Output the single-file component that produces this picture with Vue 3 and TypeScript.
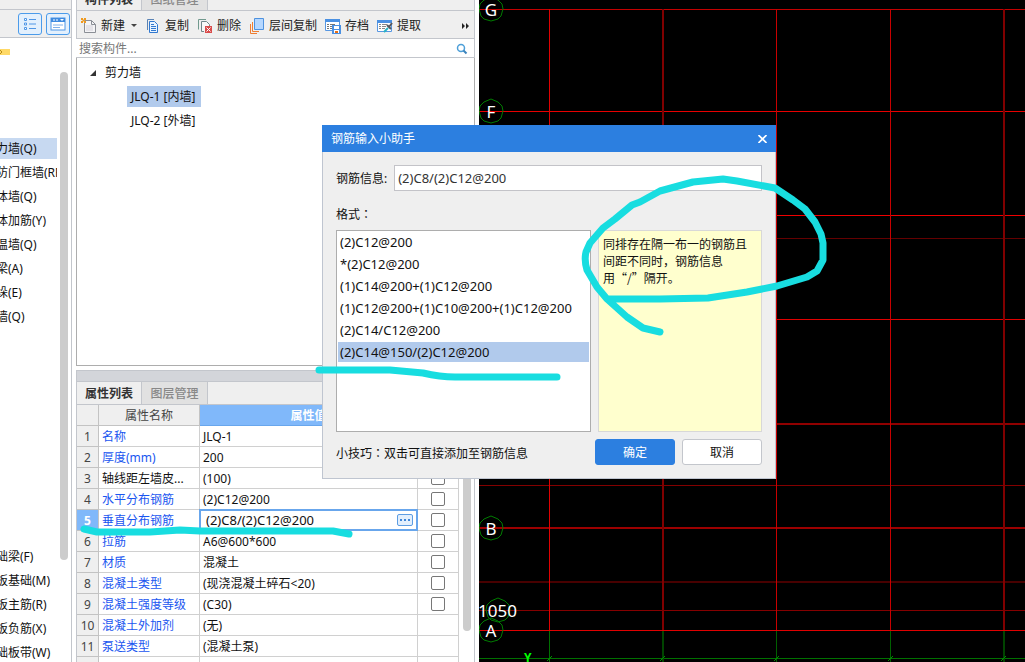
<script setup lang="ts">
import { ref } from 'vue'

interface PropertyRow {
  name: string
  value: string
  plain?: boolean
  check?: boolean
  editing?: boolean
}

const wallTypes = ['力墙(Q)', '防门框墙(RF)', '体墙(Q)', '体加筋(Y)', '温墙(Q)', '梁(A)', '垛(E)', '墙(Q)']
const baseTypes = ['础梁(F)', '板基础(M)', '板主筋(R)', '板负筋(X)', '础板带(W)']

const rows: PropertyRow[] = [
  { name: '名称', value: 'JLQ-1' },
  { name: '厚度(mm)', value: '200' },
  { name: '轴线距左墙皮...', value: '(100)', plain: true, check: true },
  { name: '水平分布钢筋', value: '(2)C12@200', check: true },
  { name: '垂直分布钢筋', value: '(2)C8/(2)C12@200', check: true, editing: true },
  { name: '拉筋', value: 'A6@600*600', check: true },
  { name: '材质', value: '混凝土', check: true },
  { name: '混凝土类型', value: '(现浇混凝土碎石<20)', check: true },
  { name: '混凝土强度等级', value: '(C30)', check: true },
  { name: '混凝土外加剂', value: '(无)' },
  { name: '泵送类型', value: '(混凝土泵)' },
]

const formats = [
  '(2)C12@200',
  '*(2)C12@200',
  '(1)C14@200+(1)C12@200',
  '(1)C12@200+(1)C10@200+(1)C12@200',
  '(2)C14/C12@200',
  '(2)C14@150/(2)C12@200',
]
const selected = ref(5)
const info = ref('(2)C8/(2)C12@200')

const hLines = [
  { y: 9, w: 1, c: '#c40000' },
  { y: 111, w: 1, c: '#e80000' },
  { y: 215, w: 1, c: '#f00000' },
  { y: 238, w: 1, c: '#640000' },
  { y: 319, w: 1, c: '#e00000' },
  { y: 423, w: 2, c: '#900000' },
  { y: 485, w: 1, c: '#840000' },
  { y: 527, w: 2, c: '#9c0000' },
  { y: 581, w: 2, c: '#480000' },
  { y: 610, w: 1, c: '#840000' },
  { y: 630, w: 1, c: '#e00000' },
]
const vLines = [
  { x: 70, w: 1, c: '#e00000', g: '#007000' },
  { x: 183, w: 2, c: '#800000', g: '#004400' },
  { x: 297, w: 1, c: '#c80000', g: '#006000' },
  { x: 411, w: 1, c: '#c80000', g: '#006000' },
  { x: 524, w: 2, c: '#800000', g: '#004400' },
]
const bubbles = [
  { t: 'G', x: 12, y: 9 },
  { t: 'F', x: 12, y: 111 },
  { t: 'B', x: 12, y: 528 },
  { t: '', x: 19, y: 610 },
  { t: 'A', x: 12, y: 630 },
]
</script>

<template>
  <main class="app">
    <aside class="types">
      <div class="types-top"></div>
      <div class="view-bar">
        <button class="view" type="button" aria-label="列表">
          <svg width="14" height="14" viewBox="0 0 14 14">
            <path d="M1.500 1.500h2v2h-2zM1.500 6h2v2h-2zM1.500 10.500h2v2h-2z" fill="#fff" stroke="#4f96e6" />
            <path d="M6 2.500h7M6 7h7M6 11.500h7" stroke="#4f96e6" />
          </svg>
        </button>
        <button class="view" type="button" aria-label="窗口">
          <svg width="16" height="14" viewBox="0 0 16 14">
            <rect x="1" y="1" width="14" height="12" fill="#fff" stroke="#4f96e6" />
            <path d="M1 1h14v4H1z" fill="#3f8be0" />
            <path d="M3 3h2M6 3h2" stroke="#fff" />
            <path d="M10 2h4l-2 2z" fill="#fff" />
            <path d="M3 8h10M3 10.500h7" stroke="#7fb0ea" />
          </svg>
        </button>
      </div>
      <div class="types-body">
        <svg class="pin" width="10" height="6" viewBox="0 0 10 6">
          <path d="M0 0h10v6H0z" fill="#ffd966" />
          <path d="M0 1l2 2-2 2" fill="none" stroke="#b98d17" />
        </svg>
        <ul class="type-list">
          <li v-for="(t, i) in wallTypes" :key="t + i" :class="{ on: i === 0 }"><span>{{ t }}</span></li>
        </ul>
        <ul class="type-list base">
          <li v-for="t in baseTypes" :key="t"><span>{{ t }}</span></li>
        </ul>
        <div class="types-thumb"></div>
      </div>
    </aside>

    <section class="middle">
      <nav class="tabs tabs-top">
        <button class="tab active" type="button">构件列表</button>
        <button class="tab" type="button">图纸管理</button>
      </nav>
      <div class="toolbar">
        <button type="button" class="tool">
          <svg width="16" height="16" viewBox="0 0 16 16">
            <path d="M3.500 2.500h7l4 4v8h-11z" fill="#f4f4f6" stroke="#8b8f96" />
            <path d="M10.500 2.500v4h4" fill="none" stroke="#8b8f96" />
            <path d="M5 8h7M5 10h7M5 12h7" stroke="#d5d2da" />
            <path d="M0 0h2v2H0zM3 0h2v2H3zM1.500 1.500h2v2h-2zM0 3h2v2H0zM3 3h2v2H3z" fill="#f09a1e" />
          </svg>新建<i class="caret"></i>
        </button>
        <button type="button" class="tool">
          <svg width="16" height="16" viewBox="0 0 16 16">
            <path d="M2.500 12V1.500H9" fill="none" stroke="#5a83b5" />
            <path d="M4.500 3.500h5l3 3v8h-8z" fill="#eaf4ff" stroke="#3279cf" />
            <path d="M6 6.500h3M6 8.500h5M6 10.500h5M6 12.500h5" stroke="#3279cf" />
          </svg>复制
        </button>
        <button type="button" class="tool">
          <svg width="16" height="16" viewBox="0 0 16 16">
            <path d="M1.500 11.500v-10H9" fill="none" stroke="#71998e" />
            <path d="M7 13.500H4.500v-10h5l3 3V8" fill="#f8f8f8" stroke="#71868a" />
            <path d="M8 8h7v7H8z" fill="#d94c4c" />
            <path d="M9.500 9.500l4 4M13.500 9.500l-4 4" stroke="#fff" />
          </svg>删除
        </button>
        <button type="button" class="tool">
          <svg width="16" height="16" viewBox="0 0 16 16">
            <path d="M1.500 6v9.500H8M3.500 4v9.500H10" fill="none" stroke="#ef7d31" />
            <path d="M5.500 .500h9v11h-9z" fill="#b5d7ff" stroke="#4e92df" />
          </svg>层间复制
        </button>
        <button type="button" class="tool">
          <svg width="16" height="16" viewBox="0 0 16 16">
            <path d="M.500 1.500h14v11H.500z" fill="#fff" stroke="#5797e2" />
            <path d="M0 1h15v3H0z" fill="#4a90e2" />
            <path d="M2 6.500h2M5 6.500h5M2 8.500h2M5 8.500h2M2 10.500h2M5 10.500h2" stroke="#777" />
            <path d="M7 7h9v9H7z" fill="#4a90e2" />
            <path d="M9 8h5v3H9z" fill="#fff" />
            <path d="M9 12h5v3H9z" fill="#fff" />
            <path d="M10 13h3v2h-3z" fill="#e86d12" />
          </svg>存档
        </button>
        <button type="button" class="tool">
          <svg width="16" height="16" viewBox="0 0 16 16">
            <path d="M.500 2.500h14v11H.500z" fill="#fff" stroke="#5797e2" />
            <path d="M0 2h15v3H0z" fill="#4a90e2" />
            <path d="M2 6.500h2M5 6.500h5M2 8.500h2M5 8.500h4M2 10.500h2M5 10.500h3" stroke="#888" />
            <path d="M7 14l4-4" stroke="#27b4c4" stroke-width="2" />
            <path d="M10 7l4 4M12 9l3-4" stroke="#53575e" stroke-width="2" />
          </svg>提取
        </button>
        <button type="button" class="more" aria-label="更多">
          <svg width="8" height="6" viewBox="0 0 8 6"><path d="M0 0l3 3-3 3zM4 0l3 3-3 3z" fill="#222" /></svg>
        </button>
      </div>
      <label class="search">
        <input type="text" placeholder="搜索构件..." aria-label="搜索构件" />
        <svg width="12" height="12" viewBox="0 0 12 12">
          <circle cx="5" cy="5" r="3.500" fill="none" stroke="#4d9fd8" stroke-width="1.500" />
          <path d="M7.500 7.500l3 3" stroke="#3c84bd" stroke-width="2" />
        </svg>
      </label>
      <div class="tree">
        <div class="tree-root">
          <svg width="8" height="8" viewBox="0 0 8 8"><path d="M7 1v6H1z" fill="#333" /></svg>剪力墙
        </div>
        <div class="leaf on">JLQ-1 [内墙]</div>
        <div class="leaf">JLQ-2 [外墙]</div>
      </div>
      <div class="splitter"></div>
      <nav class="tabs">
        <button class="tab active" type="button">属性列表</button>
        <button class="tab" type="button">图层管理</button>
      </nav>
      <div class="props">
        <table>
          <colgroup><col class="c-no" /><col class="c-name" /><col /><col class="c-check" /></colgroup>
          <thead>
            <tr><th></th><th>属性名称</th><th class="value-head">属性值</th><th></th></tr>
          </thead>
          <tbody>
            <tr v-for="(r, i) in rows" :key="r.name" :class="{ current: r.editing }">
              <td class="no">{{ i + 1 }}</td>
              <td class="name" :class="{ plain: r.plain }">{{ r.name }}</td>
              <td v-if="r.editing" class="editor">
                <div>
                  <input v-model="info" type="text" :aria-label="r.name" />
                  <button type="button" aria-label="选择">
                    <svg width="10" height="2" viewBox="0 0 10 2"><path d="M0 0h2v2H0zM4 0h2v2H4zM8 0h2v2H8z" fill="#3f86d8" /></svg>
                  </button>
                </div>
              </td>
              <td v-else class="value">{{ r.value }}</td>
              <td class="check"><input v-if="r.check" type="checkbox" :aria-label="r.name" /></td>
            </tr>
            <tr><td class="no"></td><td></td><td></td><td></td></tr>
          </tbody>
        </table>
        <div class="props-scroll"><div class="props-thumb"></div></div>
      </div>
    </section>

    <section class="canvas">
      <svg class="drawing">
        <rect v-for="l in hLines" :key="'h' + l.y" x="0" :y="l.y" width="100%" :height="l.w" :fill="l.c" />
        <rect x="0" y="658" width="100%" height="1" fill="#007000" />
        <g v-for="l in vLines" :key="'v' + l.x">
          <rect :x="l.x" y="9" :width="l.w" height="621" :fill="l.c" />
          <rect :x="l.x" y="631" :width="l.w" height="31" :fill="l.g" />
          <path :d="`M${l.x - 2} 661l5-5`" stroke="#009000" />
        </g>
        <g v-for="b in bubbles" :key="b.t">
          <polygon
            :transform="`translate(${b.x} ${b.y})`"
            points="0,-12 7,-9 11,-5 12,0 10,7 7,10 0,12 -7,10 -10,7 -12,0 -11,-5 -7,-9"
            fill="none" stroke="#007c00"
          />
          <text v-if="b.t" :x="b.x" :y="b.y + 7" text-anchor="middle">{{ b.t }}</text>
        </g>
        <text x="-1" y="617">1050</text>
        <text class="axis" x="45" y="662">Y</text>
      </svg>
    </section>

    <form class="dialog" role="dialog" aria-labelledby="dialog-title" @submit.prevent>
      <header>
        <h1 id="dialog-title">钢筋输入小助手</h1>
        <button type="button" aria-label="关闭">
          <svg width="9" height="8" viewBox="0 0 9 8"><path d="M.500 0l8 8M8.500 0l-8 8" stroke="#fff" stroke-width="1.600" /></svg>
        </button>
      </header>
      <div class="dialog-body">
        <div class="field">
          <label for="rebar">钢筋信息:</label>
          <input id="rebar" v-model="info" type="text" />
        </div>
        <p class="caption">格式<span class="colon">：</span></p>
        <div class="panes">
          <ul class="formats" role="listbox" aria-label="格式">
            <li
              v-for="(f, i) in formats" :key="f" role="option"
              :aria-selected="i === selected" :class="{ on: i === selected }" @click="selected = i"
            >{{ f }}</li>
          </ul>
          <p class="hint">同排存在隔一布一的钢筋且间距不同时，钢筋信息<br />用“/”隔开。</p>
        </div>
        <footer>
          <p>小技巧<span class="colon">：</span>双击可直接添加至钢筋信息</p>
          <button class="ok" type="submit">确定</button>
          <button type="button">取消</button>
        </footer>
      </div>
    </form>

    <svg class="marks" aria-hidden="true">
      <path d="M607 299L597 287 587 270Q584 260 586 252L590 243 603 228 615 219 632 205 640 202 660 191 693 182 723 179 737 181 775 188 793 200 805 209 815 222 821 234 823 243V260L817 271 807 277 777 286 747 292 708 298 660 299H607L627 317 643 328 660 332" />
      <path d="M319 370H390L423 373Q440 377 455 377H557" />
      <path d="M84 529L97 532H150L180 530 200 531H333L349 534" />
    </svg>
  </main>
</template>

<style>
html,
body {
  margin: 0;
  overflow: hidden;
}
</style>

<style scoped>
* {
  box-sizing: border-box;
}
.app {
  position: relative;
  display: flex;
  height: 100vh;
  overflow: hidden;
  background: #fff;
  color: #111;
  font: 12px/16px "Noto Sans", "Noto Sans CJK SC", sans-serif;
}
button,
input {
  font: inherit;
  color: inherit;
  margin: 0;
  padding: 0;
  border: 0;
  background: none;
}
button {
  display: flex;
  align-items: center;
  justify-content: center;
}
input {
  min-width: 0;
  outline: 0;
}
ul,
p,
h1 {
  margin: 0;
  padding: 0;
  list-style: none;
  font: inherit;
}
svg {
  flex: none;
}

.types {
  flex: none;
  display: flex;
  flex-direction: column;
  width: 72px;
  border-right: 1px solid #c3c6cc;
}
.types-top {
  height: 10px;
  flex: none;
  background: #efefef;
  border-bottom: 1px solid #c3c6cc;
}
.view-bar {
  height: 28px;
  flex: none;
  display: flex;
  align-items: center;
  justify-content: flex-end;
  gap: 4px;
  padding-right: 1px;
  background: #efefef;
  border-bottom: 1px solid #c3c6cc;
}
.view {
  width: 24px;
  height: 22px;
  background: #e3f0fd;
  border: 1px solid #4b9bea;
  border-radius: 3px;
}
.types-body {
  position: relative;
  flex: 1;
  min-height: 0;
  overflow: hidden;
  padding-top: 11px;
}
.pin {
  display: block;
  margin-bottom: 83px;
}
.type-list {
  display: grid;
  gap: 3px;
  width: 57px;
}
.type-list li {
  height: 21px;
  line-height: 21px;
  overflow: hidden;
  white-space: nowrap;
}
.type-list span {
  margin-left: -4px;
}
.type-list .on {
  background: #c7d9f1;
}
.base {
  margin-top: 219px;
}
.types-thumb {
  position: absolute;
  top: 34px;
  right: 3px;
  width: 8px;
  height: 488px;
  border-radius: 4px;
  background: #ccc;
}

.middle {
  flex: none;
  display: flex;
  flex-direction: column;
  width: 399px;
  margin: 0 4px;
}
.tabs {
  flex: none;
  display: flex;
  height: 23px;
  background: #efefef;
  border: solid #c3c6cc;
  border-width: 0 1px 1px;
}
.tabs-top {
  height: 11px;
  align-items: flex-end;
  overflow: hidden;
}
.tab {
  width: 66px;
  height: 22px;
  padding-top: 2px;
  background: #e1e1e1;
  border-right: 1px solid #c3c6cc;
  color: #888;
  font-weight: 500;
}
.tab.active {
  width: 65px;
  background: #efefef;
  color: #333;
  font-weight: 700;
}
.toolbar {
  height: 28px;
  flex: none;
  display: flex;
  align-items: center;
  gap: 8px;
  padding: 2px 4px 0;
  background: #efefef;
  border: solid #c3c6cc;
  border-width: 0 1px 1px;
  color: #222;
}
.tool {
  gap: 4px;
  white-space: nowrap;
}
.caret {
  margin-left: 2px;
  border: solid transparent;
  border-width: 3px 3px 0;
  border-top-color: #444;
}
.more {
  margin-left: auto;
}
.search {
  height: 19px;
  flex: none;
  display: flex;
  align-items: center;
  padding: 2px 6px 0 3px;
  border: solid #c3c6cc;
  border-width: 0 1px 1px 0;
}
.search input {
  flex: 1;
}
.search input::placeholder {
  color: #777;
  opacity: 1;
}
.tree {
  flex: none;
  height: 308px;
  padding-top: 3px;
  border: 1px solid #adadad;
  border-top: 0;
}
.tree-root {
  display: flex;
  align-items: center;
  gap: 8px;
  height: 24px;
  padding-left: 12px;
}
.leaf {
  width: max-content;
  height: 21px;
  margin: 1px 0 3px 50px;
  padding: 0 6px 0 4px;
  line-height: 21px;
}
.leaf.on {
  background: #b1caec;
}
.splitter {
  flex: none;
  height: 12px;
  margin-top: 4px;
  background: #d3d5da;
  border: 1px solid #c3c6cc;
}

.props {
  flex: 1;
  min-height: 0;
  display: flex;
  overflow: hidden;
  border: solid #c3c6cc;
  border-width: 0 1px;
}
table {
  flex: 1;
  align-self: flex-start;
  table-layout: fixed;
  border-collapse: separate;
  border-spacing: 0;
}
.c-no {
  width: 22px;
}
.c-name {
  width: 101px;
}
.c-check {
  width: 41px;
}
th,
td {
  height: 21px;
  padding: 2px 0 0;
  border: solid #d0d0d0;
  border-width: 0 1px 1px 0;
  line-height: 16px;
  white-space: nowrap;
}
th {
  background: #efefef;
  border-color: #c3c3c3;
  color: #444;
  font-weight: 400;
}
.value-head {
  background: #80b8fa;
  border-color: #68a6ec;
  color: #fff;
  font-weight: 700;
}
.no {
  background: #efefef;
  border-color: #c3c3c3;
  color: #444;
  text-align: center;
}
.name {
  padding-left: 3px;
  color: #1a56f0;
}
.plain {
  color: #111;
}
.value {
  padding-left: 3px;
}
.current .no {
  background: #80b8fa;
  color: #fff;
  font-weight: 700;
}
.editor,
.check {
  padding: 0;
}
.editor div {
  display: flex;
  align-items: center;
  height: 20px;
  padding: 0 3px 0 5px;
  outline: 1px solid #68a6ec;
  border: 1px solid #68a6ec;
}
.editor input {
  flex: 1;
  height: 16px;
}
.editor button {
  width: 16px;
  height: 12px;
  background: #e2effd;
  border: 1px solid #5d9de3;
  border-radius: 2px;
}
.check input {
  appearance: none;
  display: block;
  width: 14px;
  height: 14px;
  margin: 0 auto;
  background: #fff;
  border: 1px solid #777;
  border-radius: 2px;
}
.props-scroll {
  flex: none;
  width: 15px;
  padding-left: 4px;
}
.props-thumb {
  width: 8px;
  height: 226px;
  border-radius: 4px;
  background: #ccc;
}

.canvas {
  flex: 1;
  min-width: 0;
  background: #000;
}
.drawing {
  display: block;
  width: 100%;
  height: 100%;
}
.drawing text {
  fill: #fff;
  font-size: 17px;
}
.drawing .axis {
  fill: #0f0;
  font-size: 12px;
  font-weight: 700;
}

.dialog {
  position: absolute;
  left: 322px;
  top: 125px;
  width: 454px;
  background: #efefef;
  border: solid #bfc5d0;
  border-width: 0 1px 1px;
}
.dialog header {
  display: flex;
  align-items: center;
  justify-content: space-between;
  height: 27px;
  margin: 0 -1px;
  padding: 0 9px;
  background: #2c7fe0;
  color: #fff;
}
.dialog-body {
  padding: 13px;
}
.field {
  display: flex;
  align-items: center;
  gap: 7px;
}
.field label {
  padding-top: 2px;
}
.field input {
  flex: 1;
  height: 26px;
  padding: 0 3px;
  background: #fff;
  border: 1px solid #c3c3c8;
  color: #333;
}
.caption {
  margin: 15px 0 7px;
}
.colon {
  font-family: "Noto Sans CJK TC", sans-serif;
}
.panes {
  display: flex;
  gap: 7px;
}
.formats {
  flex: 1;
  height: 202px;
  padding: 1px;
  background: #fff;
  border: 1px solid #adadad;
}
.formats li {
  height: 20px;
  margin-bottom: 2px;
  padding-left: 2px;
  line-height: 20px;
}
.formats .on {
  background: #b1caec;
}
.field input,
.formats,
.editor input {
  font-size: 13px;
}
.hint {
  width: 164px;
  padding: 4px;
  background: #ffffce;
  border: 1px solid #d8d8d8;
  font-family: "Noto Sans CJK SC", sans-serif;
  line-height: 17px;
}
footer {
  display: flex;
  align-items: center;
  gap: 7px;
  margin-top: 7px;
}
footer p {
  flex: 1;
  padding-top: 2px;
}
footer button {
  width: 80px;
  height: 26px;
  padding-top: 2px;
  background: #fff;
  border: 1px solid #c3c6cc;
  border-radius: 3px;
}
footer .ok {
  background: #2c7fe0;
  border-color: #2c7fe0;
  color: #fff;
}

.marks {
  position: absolute;
  inset: 0;
  width: 100%;
  height: 100%;
  pointer-events: none;
}
.marks path {
  fill: none;
  stroke: #18dde0;
  stroke-width: 7px;
  stroke-linecap: round;
  stroke-linejoin: round;
}
</style>
